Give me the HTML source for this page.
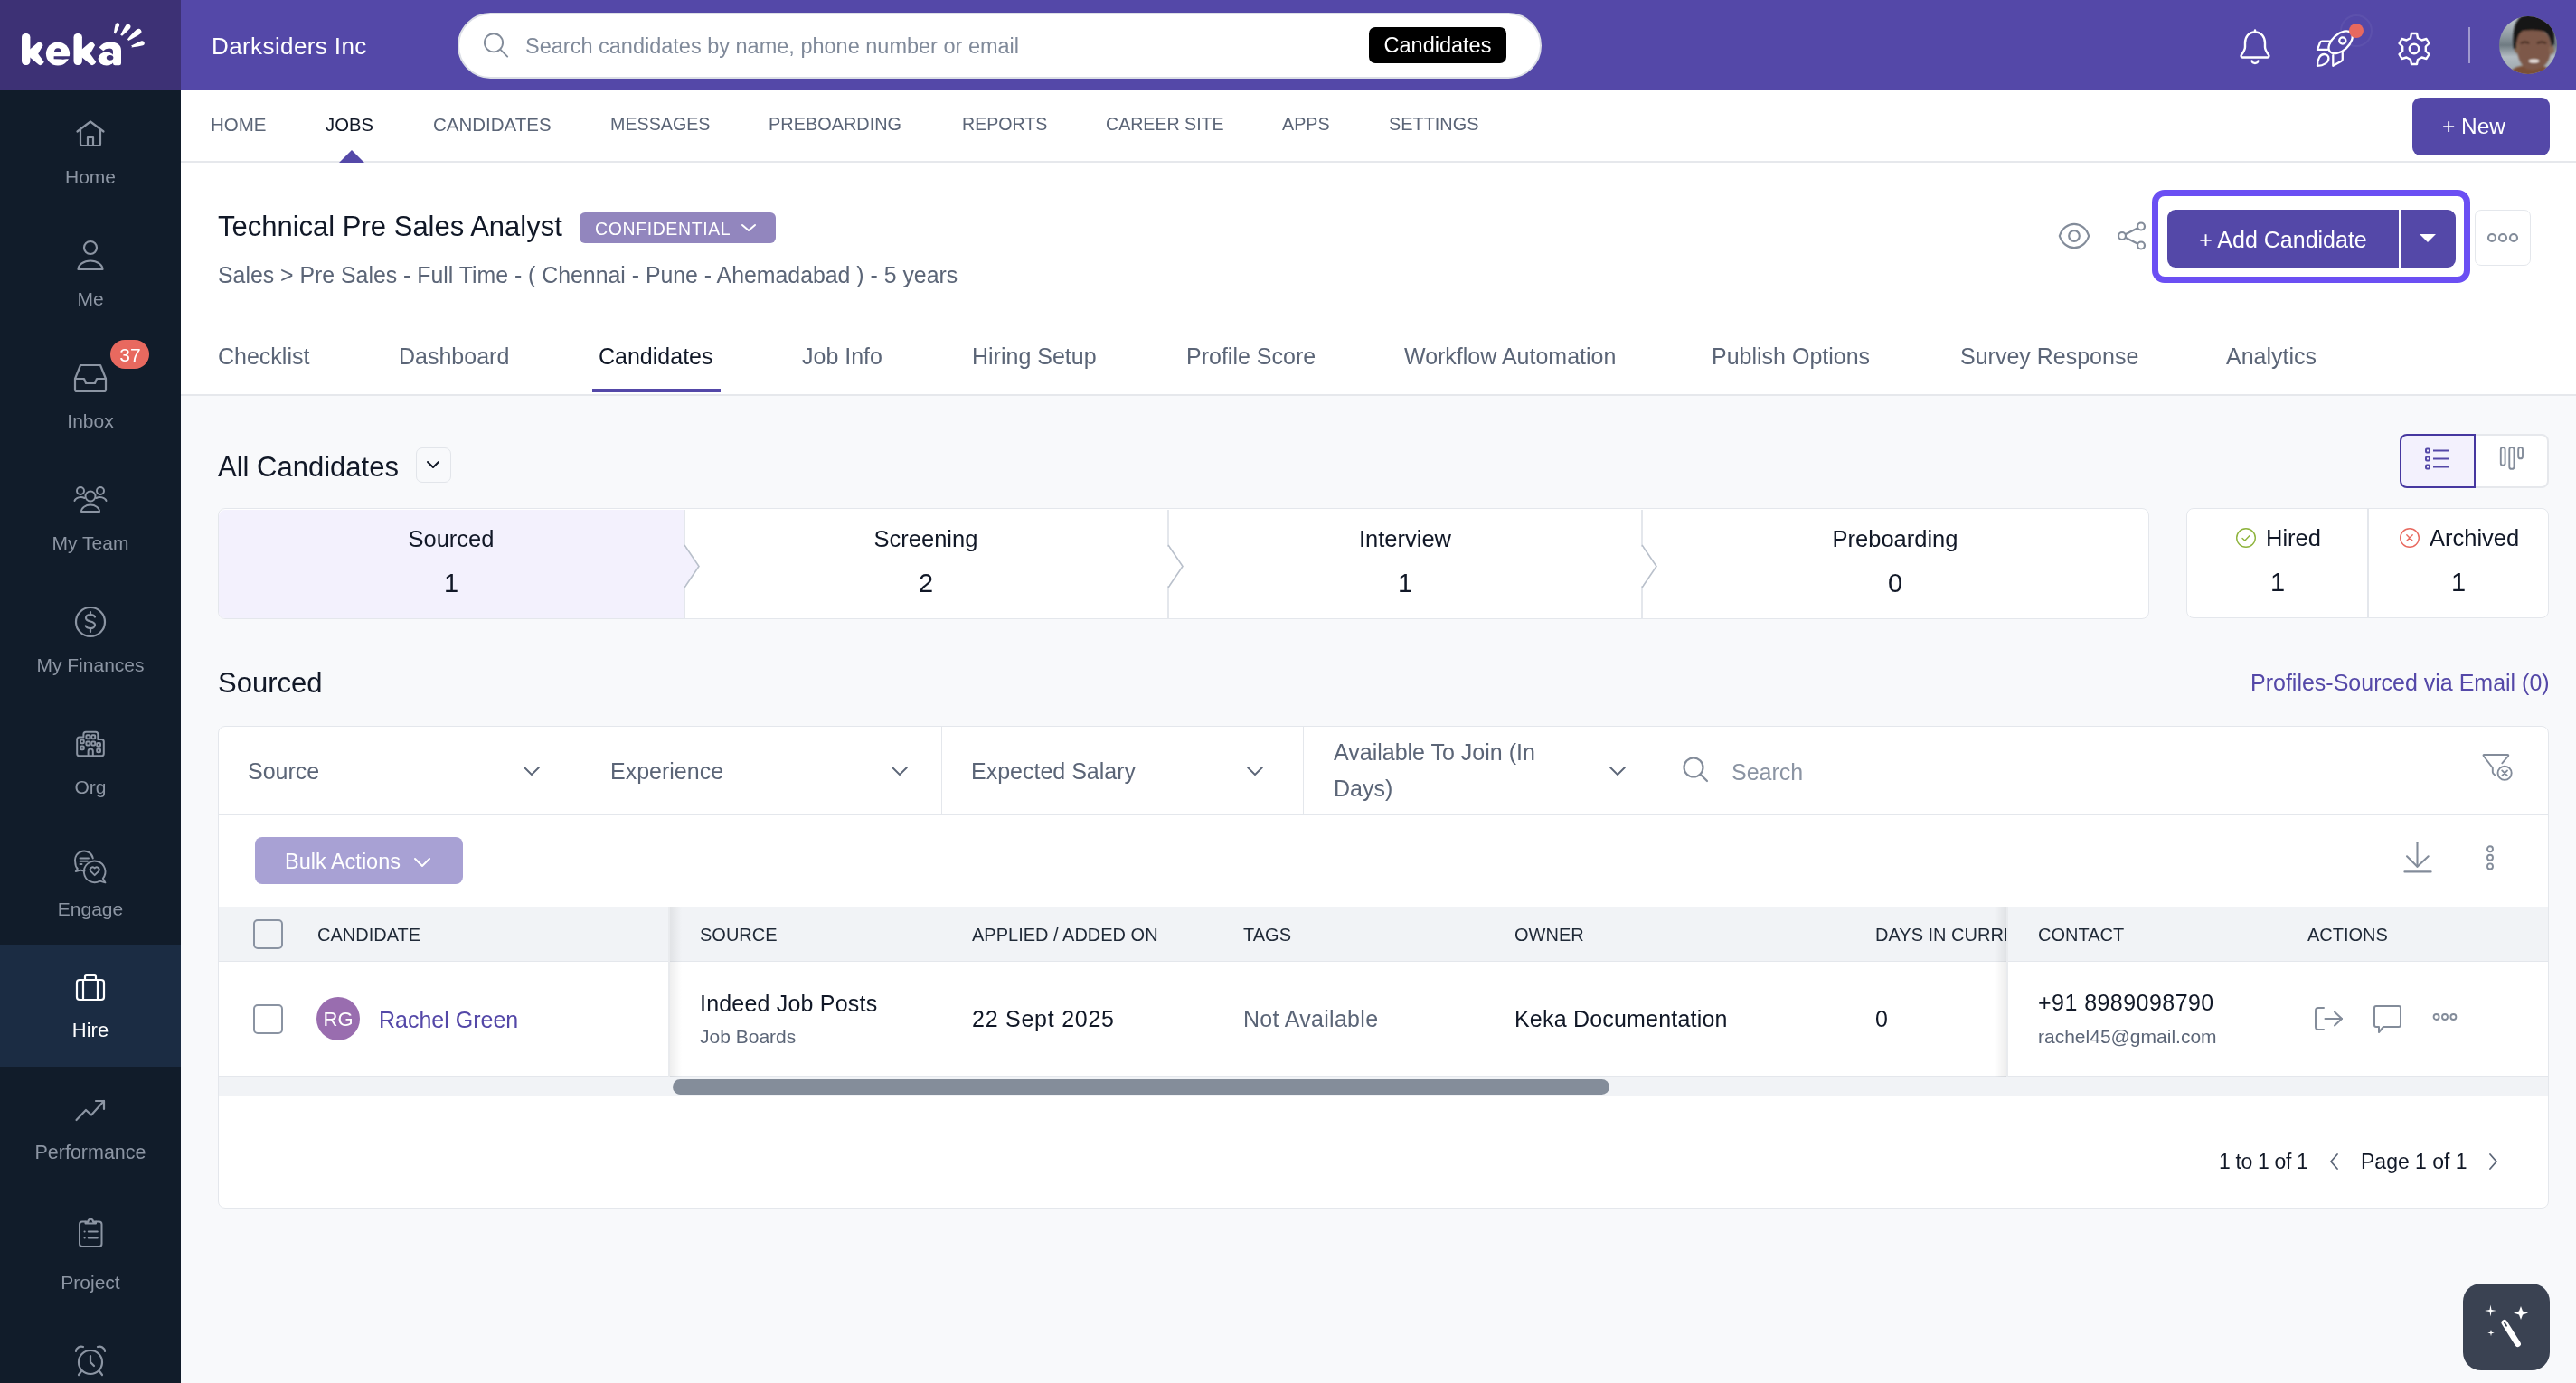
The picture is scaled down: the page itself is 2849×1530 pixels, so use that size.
<!DOCTYPE html><html><head><meta charset="utf-8"><style>
html,body{margin:0;padding:0;width:2849px;height:1530px;overflow:hidden;background:#f8f9fb;font-family:"Liberation Sans",sans-serif;}
.t{position:absolute;line-height:1;white-space:nowrap;-webkit-font-smoothing:antialiased;will-change:transform;}
.r{position:absolute;box-sizing:border-box;}
</style></head><body>
<div class="r" style="left:0px;top:0px;width:200px;height:1530px;background:#111c2a;"></div>
<div class="r" style="left:0px;top:0px;width:200px;height:100px;background:#3d3175;"></div>
<svg class="r" style="left:15px;top:15px" width="160" height="70" viewBox="0 0 160 70"><g fill="#fff"><rect x="9" y="22" width="9.4" height="35" rx="4.2"/><path d="M17 40.5 L26.3 32.4 Q29.5 30 32.6 35 L27.2 44.4 L33.8 53.8 Q31 58.5 27.8 56.6 L17 47.5 Z"/><circle cx="49" cy="44.5" r="13.1"/><rect x="66.5" y="22" width="9.4" height="35" rx="4.2"/><path d="M74.5 40.5 L83.8 32.4 Q87 30 90.1 35 L84.7 44.4 L91.3 53.8 Q88.5 58.5 85.3 56.6 L74.5 47.5 Z"/><ellipse cx="102.8" cy="50" rx="9.2" ry="7.6"/><path d="M94.6 37.6 Q99 31.6 106 31.6 Q119 31.6 119 41 V55 Q119 57.2 116.8 57.2 H112.2 Q110 57.2 110 55 V42 Q110 38.6 105.5 38.6 Q101.5 38.6 99.3 41.2 Z"/><path d="M110.74 22.32 A0.9 0.9 0 0 1 112.46 22.88 Q115.55 17.18 117.09 13.21 A2.3 2.3 0 0 0 112.71 11.79 Q111.61 15.90 110.74 22.32 Z"/><path d="M118.09 24.05 A0.9 0.9 0 0 1 119.51 25.15 Q125.55 20.07 128.90 16.16 A2.9 2.9 0 0 0 124.30 12.64 Q121.41 16.89 118.09 24.05 Z"/><path d="M125.44 28.89 A0.9 0.9 0 0 1 126.56 30.31 Q135.17 25.91 140.32 22.23 A3.1 3.1 0 0 0 136.48 17.37 Q131.71 21.53 125.44 28.89 Z"/><path d="M129.73 35.74 A0.9 0.9 0 0 1 130.27 37.46 Q138.07 36.56 143.07 35.28 A2.6 2.6 0 0 0 141.53 30.32 Q136.69 32.08 129.73 35.74 Z"/></g><g fill="#3d3175"><path d="M44.8 43 Q45 38.2 49 38.2 Q53 38.2 53.2 43 Z"/><path d="M44.6 47.3 H64 V50.2 H58.5 Q55 51 53 50.4 Q49.5 50.2 44.6 50.2 Z"/><ellipse cx="106.6" cy="48.8" rx="3.8" ry="2.9"/></g></svg>
<div class="r" style="left:0px;top:1045px;width:200px;height:135px;background:#1b2c43;"></div>
<div class="t" style="left:-900.0px;width:2000px;text-align:center;top:185.2px;font-size:21px;color:#8c95a3;">Home</div>
<div class="t" style="left:-900.0px;width:2000px;text-align:center;top:320.2px;font-size:21px;color:#8c95a3;">Me</div>
<div class="t" style="left:-900.0px;width:2000px;text-align:center;top:455.2px;font-size:21px;color:#8c95a3;">Inbox</div>
<div class="t" style="left:-900.0px;width:2000px;text-align:center;top:590.2px;font-size:21px;color:#8c95a3;">My Team</div>
<div class="t" style="left:-900.0px;width:2000px;text-align:center;top:725.2px;font-size:21px;color:#8c95a3;">My Finances</div>
<div class="t" style="left:-900.0px;width:2000px;text-align:center;top:860.2px;font-size:21px;color:#8c95a3;">Org</div>
<div class="t" style="left:-900.0px;width:2000px;text-align:center;top:995.2px;font-size:21px;color:#8c95a3;">Engage</div>
<div class="t" style="left:-900.0px;width:2000px;text-align:center;top:1129.4px;font-size:22px;color:#ffffff;">Hire</div>
<div class="t" style="left:-900.0px;width:2000px;text-align:center;top:1264.8px;font-size:21.5px;color:#8c95a3;">Performance</div>
<div class="t" style="left:-900.0px;width:2000px;text-align:center;top:1408.2px;font-size:21px;color:#8c95a3;">Project</div>
<svg class="r" style="left:82px;top:130px;" width="36" height="36" viewBox="0 0 36 36" fill="none"><g stroke="#8c95a3" stroke-width="2.2" stroke-linecap="round" stroke-linejoin="round"><path d="M3.5 15.5 L18 4.5 L32.5 15.5"/><path d="M7 13 V29 a2 2 0 0 0 2 2 H27 a2 2 0 0 0 2-2 V13"/><path d="M15 31 V22 H21 V31"/></g></svg>
<svg class="r" style="left:82px;top:262px;" width="36" height="40" viewBox="0 0 36 40" fill="none"><g stroke="#8c95a3" stroke-width="2.2" stroke-linecap="round" stroke-linejoin="round"><circle cx="18" cy="12" r="7"/><path d="M4.5 36 a13.5 9.5 0 0 1 27 0 Z"/></g></svg>
<svg class="r" style="left:80px;top:400px;" width="40" height="36" viewBox="0 0 40 36" fill="none"><g stroke="#8c95a3" stroke-width="2.2" stroke-linecap="round" stroke-linejoin="round"><path d="M9 4 H31 L37 19 V31 a2 2 0 0 1-2 2 H5 a2 2 0 0 1-2-2 V19 Z"/><path d="M3 19 H13 L15 24 H25 L27 19 H37"/></g></svg>
<div class="r" style="left:122px;top:376px;width:43px;height:32px;background:#e8695f;border-radius:16px;"></div>
<div class="t" style="left:-856.5px;width:2000px;text-align:center;top:382.2px;font-size:21px;color:#fff;">37</div>
<svg class="r" style="left:80px;top:536px;" width="40" height="34" viewBox="0 0 40 34" fill="none"><g stroke="#8c95a3" stroke-width="2" stroke-linecap="round" stroke-linejoin="round"><circle cx="20" cy="13" r="5.5"/><path d="M10 30 a10 7.5 0 0 1 20 0 Z"/><circle cx="9" cy="7" r="4"/><circle cx="31" cy="7" r="4"/><path d="M2.5 18 a7 5 0 0 1 11-3"/><path d="M37.5 18 a7 5 0 0 0-11-3"/></g></svg>
<svg class="r" style="left:82px;top:669px;" width="36" height="38" viewBox="0 0 36 38" fill="none"><g stroke="#8c95a3" stroke-width="2.2" stroke-linecap="round"><circle cx="18" cy="19" r="16"/><path d="M23 13.5 a5 4 0 0 0-5-2.5 c-3 0-5 1.6-5 3.8 c0 5 10 2.5 10 7.5 c0 2.3-2.2 3.8-5 3.8 a5.5 4 0 0 1-5.3-2.7"/><path d="M18 8 V11 M18 26 V30"/></g></svg>
<svg class="r" style="left:82px;top:806px;" width="36" height="34" viewBox="0 0 36 34" fill="none"><g stroke="#8c95a3" stroke-width="2" stroke-linejoin="round"><path d="M3.2 12 a2.5 2.5 0 0 1 2.5-2.5 H10.4 V6.3 a2.5 2.5 0 0 1 2.5-2.5 H23.8 a2.5 2.5 0 0 1 2.5 2.5 V12 H30.3 a2.5 2.5 0 0 1 2.5 2.5 V27.8 a2.5 2.5 0 0 1-2.5 2.5 H5.7 a2.5 2.5 0 0 1-2.5-2.5 Z"/><rect x="13.4" y="7.2" width="4" height="4" rx="1"/><rect x="19.2" y="7.2" width="4" height="4" rx="1"/><rect x="13.4" y="14.4" width="4" height="4" rx="1"/><rect x="19.2" y="14.4" width="4" height="4" rx="1"/><rect x="7" y="12.4" width="3.8" height="3.8" rx="1"/><rect x="7" y="19.5" width="3.8" height="3.8" rx="1"/><rect x="25.2" y="16" width="3.8" height="3.8" rx="1"/><rect x="25.2" y="22.5" width="3.8" height="3.8" rx="1"/><path d="M15.6 30.3 V25 a2.6 2.6 0 0 1 5.2 0 V30.3"/></g></svg>
<svg class="r" style="left:80px;top:940px;" width="40" height="40" viewBox="0 0 40 40" fill="none"><g stroke="#8c95a3" stroke-width="1.9" stroke-linecap="round" stroke-linejoin="round"><path d="M22.8 9.5 A10 10 0 0 0 3.2 13.5 Q3.2 18.5 5.8 21 L3.8 24 L9.5 22.6 Q11.5 23.4 13.5 23.5"/><path d="M8.5 9.5 H18 M8.5 12.8 H17 M8.5 16 H10.5"/><path d="M33.8 31.8 A11.8 11.8 0 1 0 30.5 34.6 L36.4 36.4 Z"/><path d="M24.7 28.2 L20.3 23.8 a2.7 2.7 0 0 1 4.4-3.4 a2.7 2.7 0 0 1 4.4 3.4 Z"/></g></svg>
<svg class="r" style="left:82px;top:1076px;" width="36" height="34" viewBox="0 0 36 34" fill="none"><g stroke="#fff" stroke-width="2.2" stroke-linejoin="round"><rect x="3" y="8" width="30" height="22" rx="3"/><path d="M12 8 V4.5 a1.5 1.5 0 0 1 1.5-1.5 H22.5 a1.5 1.5 0 0 1 1.5 1.5 V8"/><path d="M10 8 V30 M26 8 V30"/></g></svg>
<svg class="r" style="left:82px;top:1214px;" width="36" height="28" viewBox="0 0 36 28" fill="none"><g stroke="#8c95a3" stroke-width="2.2" stroke-linecap="round" stroke-linejoin="round"><path d="M2.5 25 L13 14 L19 19.5 L33 4"/><path d="M24 4 H33 V13"/></g></svg>
<svg class="r" style="left:84px;top:1342px;" width="32" height="40" viewBox="0 0 32 40" fill="none"><g stroke="#8c95a3" stroke-width="2" stroke-linecap="round" stroke-linejoin="round"><path d="M10 9.5 H7 a3 3 0 0 0-3 3 V34 a3 3 0 0 0 3 3 H25.5 a3 3 0 0 0 3-3 V12.5 a3 3 0 0 0-3-3 H22.5"/><path d="M10.5 11.5 V9.5 H13.5 a2.7 2.7 0 0 1 5.4 0 H22 V11.5 Z"/><path d="M9.5 20.5 H9.7 M13.8 20.5 H23.8 M9.5 27.5 H9.7 M13.8 27.5 H23.8"/></g></svg>
<svg class="r" style="left:80px;top:1486px;" width="40" height="40" viewBox="0 0 40 40" fill="none"><g stroke="#8c95a3" stroke-width="2.2" stroke-linecap="round" stroke-linejoin="round"><circle cx="20" cy="21" r="13"/><path d="M20 14 V21 L24 25"/><path d="M4 9 a6 6 0 0 1 8-5"/><path d="M36 9 a6 6 0 0 0-8-5"/><path d="M10 31 L7 35 M30 31 L33 35"/></g></svg>
<div class="r" style="left:200px;top:0px;width:2649px;height:100px;background:#5448a8;"></div>
<div class="t" style="left:233.5px;top:38.2px;font-size:26px;color:#fff;letter-spacing:0.4px;">Darksiders Inc</div>
<div class="r" style="left:505.5px;top:13.5px;width:1199.5px;height:73.0px;background:#fff;border-radius:37px;border:2px solid #dcdfe6;"></div>
<svg class="r" style="left:533px;top:35px;" width="32" height="32" viewBox="0 0 32 32" fill="none"><g stroke="#838c9a" stroke-width="1.9" stroke-linecap="round"><circle cx="13" cy="12.3" r="10.1"/><path d="M20.3 19.6 L28.2 27.6"/></g></svg>
<div class="t" style="left:581.0px;top:40.1px;font-size:23.5px;color:#808a9a;">Search candidates by name, phone number or email</div>
<div class="r" style="left:1514px;top:30px;width:152px;height:40px;background:#000;border-radius:7px;"></div>
<div class="t" style="left:590.0px;width:2000px;text-align:center;top:39.1px;font-size:23.5px;color:#fff;">Candidates</div>
<svg class="r" style="left:2474px;top:29px;" width="40" height="44" viewBox="0 0 40 44" fill="none"><g stroke="#fff" stroke-width="2.4" stroke-linecap="round" stroke-linejoin="round"><path d="M20 4.5 V6.5"/><path d="M20 6.5 c-7 0-11 5.5-11 12 v4.5 c0 3-2 6-4.2 9 a1.6 1.6 0 0 0 1.3 2.5 H33.9 a1.6 1.6 0 0 0 1.3-2.5 c-2.2-3-4.2-6-4.2-9 v-4.5 c0-6.5-4-12-11-12 Z"/><path d="M16.6 38.5 a3.5 3.2 0 0 0 6.8 0"/></g></svg>
<svg class="r" style="left:2550px;top:10px;" width="80" height="75" viewBox="0 0 80 75" fill="none"><g stroke="#fff" stroke-width="2.3" stroke-linejoin="round" stroke-linecap="round"><ellipse cx="38.6" cy="36.8" rx="15.6" ry="9.1" transform="rotate(-42 38.6 36.8)"/><circle cx="40.8" cy="35" r="3.6"/><path d="M27.3 35.6 L18.2 35.6 Q16.6 35.6 15.9 37.1 L13 44.8 L24.4 44.8"/><path d="M40.8 48.6 L40.8 55.4 Q40.8 57 39.4 57.7 L30.3 62.8 L30.3 51.2"/><path d="M13 62.8 C13 55 16 50 20.4 50 C23.4 50 25.4 52 25.4 54.6 C25.4 59 20 62.8 13 62.8 Z"/></g></svg>
<div class="r" style="left:2588px;top:16px;width:36px;height:36px;border-radius:50%;border:2px solid rgba(255,255,255,0.05);"></div>
<div class="r" style="left:2597.8px;top:25.8px;width:16.199999999999818px;height:16.2px;background:#e8695f;border-radius:50%;"></div>
<svg class="r" style="left:2650px;top:34px;" width="40" height="40" viewBox="0 0 40 40" fill="none"><g stroke="#fff" stroke-width="2.4" stroke-linejoin="round"><path d="M17 3 H23 L24 8 L28.5 10.5 L33.5 9 L36.5 14 L32.8 17.5 V22.5 L36.5 26 L33.5 31 L28.5 29.5 L24 32 L23 37 H17 L16 32 L11.5 29.5 L6.5 31 L3.5 26 L7.2 22.5 V17.5 L3.5 14 L6.5 9 L11.5 10.5 L16 8 Z"/><circle cx="20" cy="20" r="5.2"/></g></svg>
<div class="r" style="left:2730px;top:30px;width:2px;height:40px;background:rgba(255,255,255,0.45);"></div>
<svg class="r" style="left:2764px;top:18px;" width="64" height="64" viewBox="0 0 64 64" fill="none"><defs><clipPath id="av"><circle cx="32" cy="32" r="32"/></clipPath>
<filter id="bl" x="-10%" y="-10%" width="120%" height="120%"><feGaussianBlur stdDeviation="1.3"/></filter>
<linearGradient id="bgg" x1="0" y1="0" x2="0" y2="1"><stop offset="0" stop-color="#c4ccd0"/><stop offset="0.35" stop-color="#8d989f"/><stop offset="0.5" stop-color="#6f7b82"/><stop offset="0.7" stop-color="#b3bcc2"/><stop offset="1" stop-color="#9aa4aa"/></linearGradient></defs>
<g clip-path="url(#av)"><rect width="64" height="64" fill="url(#bgg)"/><g filter="url(#bl)">
<path d="M10 70 Q12 56 24 55 L48 55 Q58 57 60 70 Z" fill="#7a5038"/>
<path d="M19 30 Q18 14 36 14 Q56 14 57 32 Q58 50 48 56 Q40 61 30 58 Q20 52 19 30 Z" fill="#7d5948"/>
<ellipse cx="20" cy="36" rx="3" ry="5" fill="#80604e"/><ellipse cx="58" cy="37" rx="3" ry="5" fill="#8a6a56"/>
<path d="M16 36 Q12 -4 36 -3 Q64 -2 61 30 L58 34 Q56 20 50 17 Q40 14 26 16 Q19 20 18.5 36 Z" fill="#121212"/>
<path d="M24 30 Q29 27 33 30 M42 30 Q47 27 52 30" stroke="#3a2218" stroke-width="2.2" fill="none"/>
<ellipse cx="38.5" cy="49.5" rx="5.8" ry="2" fill="#efe7e4"/>
</g></g></svg>
<div class="r" style="left:200px;top:100px;width:2649px;height:80px;background:#fff;"></div>
<div class="r" style="left:200px;top:178px;width:2649px;height:2px;background:#e6e8ec;"></div>
<div class="t" style="left:233.0px;top:127.6px;font-size:20.5px;color:#5b6577;">HOME</div>
<div class="t" style="left:360.0px;top:127.8px;font-size:20.3px;color:#111827;">JOBS</div>
<div class="t" style="left:478.5px;top:127.6px;font-size:20.5px;color:#5b6577;">CANDIDATES</div>
<div class="t" style="left:674.9px;top:128.3px;font-size:19.7px;color:#5b6577;">MESSAGES</div>
<div class="t" style="left:850.3px;top:128.2px;font-size:19.9px;color:#5b6577;">PREBOARDING</div>
<div class="t" style="left:1064.0px;top:128.4px;font-size:19.6px;color:#5b6577;">REPORTS</div>
<div class="t" style="left:1223.3px;top:128.4px;font-size:19.6px;color:#5b6577;">CAREER SITE</div>
<div class="t" style="left:1418.3px;top:128.3px;font-size:19.7px;color:#5b6577;">APPS</div>
<div class="t" style="left:1536.2px;top:128.2px;font-size:19.9px;color:#5b6577;">SETTINGS</div>
<svg class="r" style="left:375px;top:166px;" width="28" height="14" viewBox="0 0 28 14" fill="none"><path d="M0 14 L14 0 L28 14 Z" fill="#5448a8"/></svg>
<div class="r" style="left:2668px;top:108px;width:152px;height:64px;background:#5448a8;border-radius:9px;"></div>
<div class="t" style="left:1736.0px;width:2000px;text-align:center;top:128.3px;font-size:24.5px;color:#fff;">+ New</div>
<div class="r" style="left:200px;top:180px;width:2649px;height:256px;background:#fff;"></div>
<div class="r" style="left:200px;top:436px;width:2649px;height:2px;background:#e6e8ec;"></div>
<div class="t" style="left:241.0px;top:234.8px;font-size:31px;color:#111827;">Technical Pre Sales Analyst</div>
<div class="r" style="left:641px;top:235px;width:217px;height:34px;background:#9286be;border-radius:6px;"></div>
<div class="t" style="left:657.7px;top:243.9px;font-size:19.5px;color:#fff;letter-spacing:0.6px;">CONFIDENTIAL</div>
<svg class="r" style="left:818px;top:246px;" width="20" height="12" viewBox="0 0 20 12" fill="none"><path d="M3 3 L10 9 L17 3" stroke="#fff" stroke-width="2" stroke-linecap="round" stroke-linejoin="round"/></svg>
<div class="t" style="left:241.0px;top:292.5px;font-size:24.85px;color:#5b6577;">Sales &gt; Pre Sales - Full Time - ( Chennai - Pune - Ahemadabad ) - 5 years</div>
<div class="t" style="left:241.0px;top:382.4px;font-size:25px;color:#5b6577;">Checklist</div>
<div class="t" style="left:441.0px;top:382.4px;font-size:25px;color:#5b6577;">Dashboard</div>
<div class="t" style="left:662.0px;top:382.4px;font-size:25px;color:#111827;">Candidates</div>
<div class="t" style="left:886.5px;top:382.4px;font-size:25px;color:#5b6577;">Job Info</div>
<div class="t" style="left:1074.7px;top:382.4px;font-size:25px;color:#5b6577;">Hiring Setup</div>
<div class="t" style="left:1312.0px;top:382.4px;font-size:25px;color:#5b6577;">Profile Score</div>
<div class="t" style="left:1553.0px;top:382.4px;font-size:25px;color:#5b6577;">Workflow Automation</div>
<div class="t" style="left:1893.0px;top:382.4px;font-size:25px;color:#5b6577;">Publish Options</div>
<div class="t" style="left:2168.0px;top:382.4px;font-size:25px;color:#5b6577;">Survey Response</div>
<div class="t" style="left:2462.0px;top:382.4px;font-size:25px;color:#5b6577;">Analytics</div>
<div class="r" style="left:655px;top:430px;width:142px;height:4px;background:#5448a8;"></div>
<svg class="r" style="left:2274px;top:244px;" width="40" height="34" viewBox="0 0 40 34" fill="none"><g stroke="#838c9a" stroke-width="2.2"><path d="M3.8 17 C9.5 -0.5 30.5 -0.5 36.2 17 C30.5 34.5 9.5 34.5 3.8 17 Z"/><circle cx="20" cy="17" r="5.8"/></g></svg>
<svg class="r" style="left:2340px;top:243px;" width="36" height="36" viewBox="0 0 36 36" fill="none"><g stroke="#838c9a" stroke-width="2.2"><circle cx="28" cy="7.5" r="4"/><circle cx="7" cy="18" r="4"/><circle cx="28" cy="28.5" r="4"/><path d="M10.6 16.2 L24.4 9.3 M10.6 19.8 L24.4 26.7"/></g></svg>
<div class="r" style="left:2380px;top:210px;width:352px;height:103px;border:7.5px solid #6b4ff3;border-radius:14px;"></div>
<div class="r" style="left:2397px;top:232px;width:319px;height:64px;background:#5448a8;border-radius:9px;"></div>
<div class="r" style="left:2652.5px;top:232px;width:2.0px;height:64px;background:#fff;"></div>
<div class="t" style="left:1524.5px;width:2000px;text-align:center;top:252.5px;font-size:25px;color:#fff;">+ Add Candidate</div>
<svg class="r" style="left:2674px;top:256px;" width="22" height="14" viewBox="0 0 22 14" fill="none"><path d="M2 3 L11 12 L20 3 Z" fill="#fff"/></svg>
<div class="r" style="left:2737px;top:231.5px;width:62px;height:62.5px;background:#fff;border:1.5px solid #e4e7ec;border-radius:7px;"></div>
<svg class="r" style="left:2750px;top:253px;" width="36" height="20" viewBox="0 0 36 20" fill="none"><g stroke="#838c9a" stroke-width="2.2"><circle cx="6" cy="10" r="4"/><circle cx="18" cy="10" r="4"/><circle cx="30" cy="10" r="4"/></g></svg>
<div class="t" style="left:241.0px;top:500.8px;font-size:31px;color:#111827;">All Candidates</div>
<div class="r" style="left:459.5px;top:494.5px;width:39.0px;height:39.0px;border:1.5px solid #e2e5ea;border-radius:7px;background:#f8f9fb;"></div>
<svg class="r" style="left:469px;top:505px;" width="20" height="18" viewBox="0 0 20 18" fill="none"><path d="M4 6 L10 12 L16 6" stroke="#111827" stroke-width="2" stroke-linecap="round" stroke-linejoin="round"/></svg>
<div class="r" style="left:2654px;top:480px;width:165px;height:60px;background:#fff;border:2px solid #e6e8ec;border-radius:8px;"></div>
<div class="r" style="left:2654px;top:480px;width:83.5px;height:60px;background:#f3f1fd;border:2.5px solid #4637a0;border-radius:8px 0 0 8px;"></div>
<svg class="r" style="left:2680px;top:493px;" width="34" height="34" viewBox="0 0 34 34" fill="none"><g stroke="#5448a8" stroke-width="2"><rect x="3" y="3.5" width="4" height="4" rx="1"/><rect x="3" y="12.5" width="4" height="4" rx="1"/><rect x="3" y="21.5" width="4" height="4" rx="1"/><path d="M11 5.5 H29 M11 14.5 H29 M11 23.5 H29"/></g></svg>
<svg class="r" style="left:2762px;top:492px;" width="34" height="34" viewBox="0 0 34 34" fill="none"><g stroke="#838c9a" stroke-width="1.9"><rect x="3.8" y="3" width="4.8" height="19.8" rx="2.4"/><rect x="13.3" y="3" width="5.2" height="23.8" rx="2.4"/><rect x="23.2" y="3" width="4.8" height="12.3" rx="2.4"/></g></svg>
<div class="r" style="left:241px;top:562px;width:2136px;height:123px;background:#fff;border:1.5px solid #e4e7ec;border-radius:8px;"></div>
<div class="r" style="left:242px;top:563.5px;width:515px;height:120.0px;background:#f3f1fd;border-radius:7px 0 0 7px;"></div>
<div class="r" style="left:756.5px;top:563.5px;width:1.5px;height:120.0px;background:#e4e7ec;"></div>
<svg class="r" style="left:756px;top:602px;" width="20" height="50" viewBox="0 0 20 50" fill="none"><path d="M1 1 L17 24.5 L1 48" fill="#f3f1fd" stroke="#b9c0cb" stroke-width="1.6"/><rect x="0" y="3" width="1.6" height="43" fill="#f3f1fd"/></svg>
<div class="r" style="left:1291.0px;top:563.5px;width:1.5px;height:120.0px;background:#e4e7ec;"></div>
<svg class="r" style="left:1290.5px;top:602px;" width="20" height="50" viewBox="0 0 20 50" fill="none"><path d="M1 1 L17 24.5 L1 48" fill="#fff" stroke="#b9c0cb" stroke-width="1.6"/><rect x="0" y="3" width="1.6" height="43" fill="#fff"/></svg>
<div class="r" style="left:1815.0px;top:563.5px;width:1.5px;height:120.0px;background:#e4e7ec;"></div>
<svg class="r" style="left:1814.5px;top:602px;" width="20" height="50" viewBox="0 0 20 50" fill="none"><path d="M1 1 L17 24.5 L1 48" fill="#fff" stroke="#b9c0cb" stroke-width="1.6"/><rect x="0" y="3" width="1.6" height="43" fill="#fff"/></svg>
<div class="t" style="left:-501.0px;width:2000px;text-align:center;top:583.9px;font-size:25.5px;color:#111827;">Sourced</div>
<div class="t" style="left:-501.0px;width:2000px;text-align:center;top:631.4px;font-size:29px;color:#111827;">1</div>
<div class="t" style="left:24.0px;width:2000px;text-align:center;top:583.9px;font-size:25.5px;color:#111827;">Screening</div>
<div class="t" style="left:24.0px;width:2000px;text-align:center;top:631.4px;font-size:29px;color:#111827;">2</div>
<div class="t" style="left:553.5px;width:2000px;text-align:center;top:583.9px;font-size:25.5px;color:#111827;">Interview</div>
<div class="t" style="left:553.5px;width:2000px;text-align:center;top:631.4px;font-size:29px;color:#111827;">1</div>
<div class="t" style="left:1096.0px;width:2000px;text-align:center;top:583.9px;font-size:25.5px;color:#111827;">Preboarding</div>
<div class="t" style="left:1096.0px;width:2000px;text-align:center;top:631.4px;font-size:29px;color:#111827;">0</div>
<div class="r" style="left:2418px;top:562px;width:401px;height:122px;background:#fff;border:1.5px solid #e4e7ec;border-radius:8px;"></div>
<div class="r" style="left:2618px;top:563px;width:2px;height:120px;background:#e4e7ec;"></div>
<svg class="r" style="left:2471px;top:582px;" width="26" height="26" viewBox="0 0 26 26" fill="none"><g stroke="#8db33b" stroke-width="1.4" stroke-linecap="round" stroke-linejoin="round"><circle cx="13" cy="13" r="10.3"/><path d="M9 13.5 L11.8 16 L16.8 10.8"/></g></svg>
<div class="t" style="left:2506.0px;top:583.4px;font-size:25.5px;color:#111827;">Hired</div>
<div class="t" style="left:1519.0px;width:2000px;text-align:center;top:630.4px;font-size:29px;color:#111827;">1</div>
<svg class="r" style="left:2652px;top:582px;" width="26" height="26" viewBox="0 0 26 26" fill="none"><g stroke="#e8695f" stroke-width="1.4" stroke-linecap="round"><circle cx="13" cy="13" r="10.3"/><path d="M9.8 9.8 L16.2 16.2 M16.2 9.8 L9.8 16.2"/></g></svg>
<div class="t" style="left:2687.0px;top:583.4px;font-size:25.5px;color:#111827;">Archived</div>
<div class="t" style="left:1718.5px;width:2000px;text-align:center;top:630.4px;font-size:29px;color:#111827;">1</div>
<div class="t" style="left:241.0px;top:740.2px;font-size:31px;color:#111827;">Sourced</div>
<div class="t" style="right:29.0px;top:742.6px;font-size:25px;color:#5448a8;">Profiles-Sourced via Email (0)</div>
<div class="r" style="left:241px;top:803px;width:2578px;height:534px;background:#fff;border:1.5px solid #e4e7ec;border-radius:8px;"></div>
<div class="r" style="left:242px;top:900px;width:2576px;height:1.5px;background:#e4e7ec;"></div>
<div class="r" style="left:640.5px;top:804px;width:1.5px;height:96px;background:#e4e7ec;"></div>
<div class="r" style="left:1040.5px;top:804px;width:1.5px;height:96px;background:#e4e7ec;"></div>
<div class="r" style="left:1440.5px;top:804px;width:1.5px;height:96px;background:#e4e7ec;"></div>
<div class="r" style="left:1840.5px;top:804px;width:1.5px;height:96px;background:#e4e7ec;"></div>
<div class="t" style="left:274.4px;top:840.6px;font-size:25px;color:#5b6577;">Source</div>
<div class="t" style="left:674.5px;top:840.6px;font-size:25px;color:#5b6577;">Experience</div>
<div class="t" style="left:1074.0px;top:840.6px;font-size:25px;color:#5b6577;">Expected Salary</div>
<div class="t" style="left:1474.5px;top:819.8px;font-size:25px;color:#5b6577;">Available To Join (In</div>
<div class="t" style="left:1474.5px;top:860.2px;font-size:25px;color:#5b6577;">Days)</div>
<svg class="r" style="left:578px;top:845px;" width="22" height="16" viewBox="0 0 22 16" fill="none"><path d="M2 4 L10 12 L18 4" stroke="#5b6577" stroke-width="1.8" stroke-linecap="round" stroke-linejoin="round"/></svg>
<svg class="r" style="left:985px;top:845px;" width="22" height="16" viewBox="0 0 22 16" fill="none"><path d="M2 4 L10 12 L18 4" stroke="#5b6577" stroke-width="1.8" stroke-linecap="round" stroke-linejoin="round"/></svg>
<svg class="r" style="left:1378px;top:845px;" width="22" height="16" viewBox="0 0 22 16" fill="none"><path d="M2 4 L10 12 L18 4" stroke="#5b6577" stroke-width="1.8" stroke-linecap="round" stroke-linejoin="round"/></svg>
<svg class="r" style="left:1779px;top:845px;" width="22" height="16" viewBox="0 0 22 16" fill="none"><path d="M2 4 L10 12 L18 4" stroke="#5b6577" stroke-width="1.8" stroke-linecap="round" stroke-linejoin="round"/></svg>
<svg class="r" style="left:1860px;top:836px;" width="32" height="32" viewBox="0 0 32 32" fill="none"><g stroke="#838c9a" stroke-width="2.2" stroke-linecap="round"><circle cx="13" cy="13" r="10.5"/><path d="M20.5 20.5 L28 28"/></g></svg>
<div class="t" style="left:1915.0px;top:841.5px;font-size:25px;color:#8b94a3;">Search</div>
<svg class="r" style="left:2743px;top:832px;" width="40" height="36" viewBox="0 0 40 36" fill="none"><g stroke="#838c9a" stroke-width="1.9" stroke-linecap="round" stroke-linejoin="round"><path d="M24.3 12.3 L31 4.5 Q31.8 3 30.3 3 H4.4 Q2.9 3 3.9 4.5 L13.8 17.5 V22.3 Q13.8 24 16.2 25.3"/><circle cx="27.1" cy="23.3" r="7.6"/><path d="M24.2 20.4 L30 26.2 M30 20.4 L24.2 26.2"/></g></svg>
<div class="r" style="left:282px;top:926px;width:230px;height:52px;background:#a8a1d4;border-radius:8px;"></div>
<div class="t" style="left:314.6px;top:941.5px;font-size:23.5px;color:#fff;">Bulk Actions</div>
<svg class="r" style="left:456px;top:946px;" width="22" height="16" viewBox="0 0 22 16" fill="none"><path d="M3 4 L11 12 L19 4" stroke="#fff" stroke-width="2" stroke-linecap="round" stroke-linejoin="round"/></svg>
<svg class="r" style="left:2656px;top:930px;" width="36" height="38" viewBox="0 0 36 38" fill="none"><g stroke="#838c9a" stroke-width="2.1" stroke-linecap="round" stroke-linejoin="round"><path d="M17.5 2.2 V28.5"/><path d="M6 17.3 L17.5 28.8 L29.7 17.3"/><path d="M3.4 34.4 H32.6"/></g></svg>
<svg class="r" style="left:2744px;top:933px;" width="20" height="32" viewBox="0 0 20 32" fill="none"><g stroke="#838c9a" stroke-width="1.9"><circle cx="10" cy="6.2" r="3"/><circle cx="10" cy="15.8" r="3"/><circle cx="10" cy="25.4" r="3"/></g></svg>
<div class="r" style="left:242px;top:1003px;width:2576px;height:60.5px;background:#f1f3f6;border-bottom:1.5px solid #e4e7ec;"></div>
<div class="r" style="left:242px;top:1063.5px;width:2576px;height:127.0px;background:#fff;border-bottom:1.5px solid #e4e7ec;"></div>
<div class="r" style="left:279.5px;top:1016.5px;width:33.0px;height:33.0px;border:2.5px solid #8a93a2;border-radius:5px;background:transparent;"></div>
<div class="r" style="left:279.5px;top:1110.5px;width:33.0px;height:33.0px;border:2.5px solid #8a93a2;border-radius:5px;background:#fff;"></div>
<div class="t" style="left:350.8px;top:1024.0px;font-size:20px;color:#1f2937;">CANDIDATE</div>
<div class="t" style="left:774.0px;top:1024.0px;font-size:20px;color:#1f2937;">SOURCE</div>
<div class="t" style="left:1074.5px;top:1024.0px;font-size:20px;color:#1f2937;">APPLIED / ADDED ON</div>
<div class="t" style="left:1374.8px;top:1024.0px;font-size:20px;color:#1f2937;">TAGS</div>
<div class="t" style="left:1674.5px;top:1024.0px;font-size:20px;color:#1f2937;">OWNER</div>
<div class="t" style="left:2074.0px;top:1024.0px;font-size:20px;color:#1f2937;">DAYS IN CURRE</div>
<div class="t" style="left:2254.4px;top:1024.0px;font-size:20px;color:#1f2937;">CONTACT</div>
<div class="t" style="left:2552.0px;top:1024.0px;font-size:20px;color:#1f2937;">ACTIONS</div>
<div class="r" style="left:740px;top:1003px;width:14px;height:188px;background:linear-gradient(to right,rgba(0,0,0,0.07),rgba(0,0,0,0));"></div>
<div class="r" style="left:739px;top:1003px;width:1.5px;height:188px;background:#e9ebee;"></div>
<div class="r" style="left:2220px;top:1003px;width:598px;height:60.5px;background:#f1f3f6;border-bottom:1.5px solid #e4e7ec;"></div>
<div class="r" style="left:2220px;top:1063.5px;width:598px;height:127.0px;background:#fff;border-bottom:1.5px solid #e4e7ec;"></div>
<div class="r" style="left:2206px;top:1003px;width:14px;height:188px;background:linear-gradient(to left,rgba(0,0,0,0.07),rgba(0,0,0,0));"></div>
<div class="r" style="left:2219px;top:1003px;width:1.5px;height:188px;background:#e9ebee;"></div>
<div class="t" style="left:2254.4px;top:1024.0px;font-size:20px;color:#1f2937;">CONTACT</div>
<div class="t" style="left:2552.0px;top:1024.0px;font-size:20px;color:#1f2937;">ACTIONS</div>
<div class="r" style="left:350px;top:1103px;width:48px;height:48px;background:#996daf;border-radius:50%;"></div>
<div class="t" style="left:-626.0px;width:2000px;text-align:center;top:1116.9px;font-size:22px;color:#fff;">RG</div>
<div class="t" style="left:419.0px;top:1115.6px;font-size:25px;color:#5448a8;">Rachel Green</div>
<div class="t" style="left:774.0px;top:1097.5px;font-size:25px;color:#111827;letter-spacing:0.2px;">Indeed Job Posts</div>
<div class="t" style="left:774.0px;top:1136.2px;font-size:21px;color:#5b6577;">Job Boards</div>
<div class="t" style="left:1074.5px;top:1114.8px;font-size:25px;color:#111827;letter-spacing:0.75px;">22 Sept 2025</div>
<div class="t" style="left:1374.8px;top:1114.8px;font-size:25px;color:#5b6577;letter-spacing:0.3px;">Not Available</div>
<div class="t" style="left:1674.5px;top:1114.8px;font-size:25px;color:#111827;letter-spacing:0.2px;">Keka Documentation</div>
<div class="t" style="left:2074.0px;top:1114.8px;font-size:25px;color:#111827;">0</div>
<div class="t" style="left:2254.0px;top:1096.8px;font-size:25px;color:#111827;letter-spacing:0.45px;">+91 8989098790</div>
<div class="t" style="left:2254.0px;top:1136.2px;font-size:21px;color:#5b6577;">rachel45@gmail.com</div>
<svg class="r" style="left:2558px;top:1111px;" width="36" height="32" viewBox="0 0 36 32" fill="none"><g stroke="#838c9a" stroke-width="2" stroke-linecap="round" stroke-linejoin="round"><path d="M12 4 H6 a3 3 0 0 0-3 3 V25 a3 3 0 0 0 3 3 H12"/><path d="M13.5 16 H32"/><path d="M24 8.5 L32 16 L24 23.5"/></g></svg>
<svg class="r" style="left:2622px;top:1110px;" width="36" height="36" viewBox="0 0 36 36" fill="none"><g stroke="#838c9a" stroke-width="2" stroke-linejoin="round"><path d="M4 5 a2 2 0 0 1 2-2 H31 a2 2 0 0 1 2 2 V24 a2 2 0 0 1-2 2 H14 L9 32 V26 H6 a2 2 0 0 1-2-2 Z"/></g></svg>
<svg class="r" style="left:2688px;top:1117px;" width="32" height="16" viewBox="0 0 32 16" fill="none"><g stroke="#838c9a" stroke-width="1.9"><circle cx="6.6" cy="8" r="3"/><circle cx="16" cy="8" r="3"/><circle cx="25.4" cy="8" r="3"/></g></svg>
<div class="r" style="left:242px;top:1191px;width:2576px;height:21px;background:#f1f3f6;"></div>
<div class="r" style="left:744px;top:1193.5px;width:1036px;height:17.0px;background:#848d9a;border-radius:9px;"></div>
<div class="t" style="left:2454.0px;top:1273.9px;font-size:23px;color:#111827;letter-spacing:-0.35px;">1 to 1 of 1</div>
<svg class="r" style="left:2572px;top:1274px;" width="20" height="22" viewBox="0 0 20 22" fill="none"><path d="M13 3 L6 11 L13 19" stroke="#5b6577" stroke-width="1.8" stroke-linecap="round" stroke-linejoin="round"/></svg>
<div class="t" style="left:2611.0px;top:1273.9px;font-size:23px;color:#111827;">Page 1 of 1</div>
<svg class="r" style="left:2747px;top:1274px;" width="20" height="22" viewBox="0 0 20 22" fill="none"><path d="M7 3 L14 11 L7 19" stroke="#5b6577" stroke-width="1.8" stroke-linecap="round" stroke-linejoin="round"/></svg>
<div class="r" style="left:2724px;top:1420px;width:96px;height:96px;background:#3a4252;border-radius:20px;"></div>
<svg class="r" style="left:2724px;top:1420px;" width="96" height="96" viewBox="0 0 96 96" fill="none"><g fill="#fff">
<path d="M30.5 23.5 L31.5 29 L37 30 L31.5 31 L30.5 36.5 L29.5 31 L24 30 L29.5 29 Z"/>
<path d="M64 25 L66 30.5 L72 32.5 L66 34.5 L64 40 L62 34.5 L56 32.5 L62 30.5 Z"/>
<path d="M31 50.7 L31.7 53.8 L34.8 54.5 L31.7 55.2 L31 58.3 L30.3 55.2 L27.2 54.5 L30.3 53.8 Z"/>
</g><path d="M45.8 43.2 L60.6 66.8" stroke="#fff" stroke-width="6.6" stroke-linecap="round"/><path d="M46 43.6 L48 46.8" stroke="#3a4252" stroke-width="1.8" stroke-linecap="round"/></svg>
</body></html>
